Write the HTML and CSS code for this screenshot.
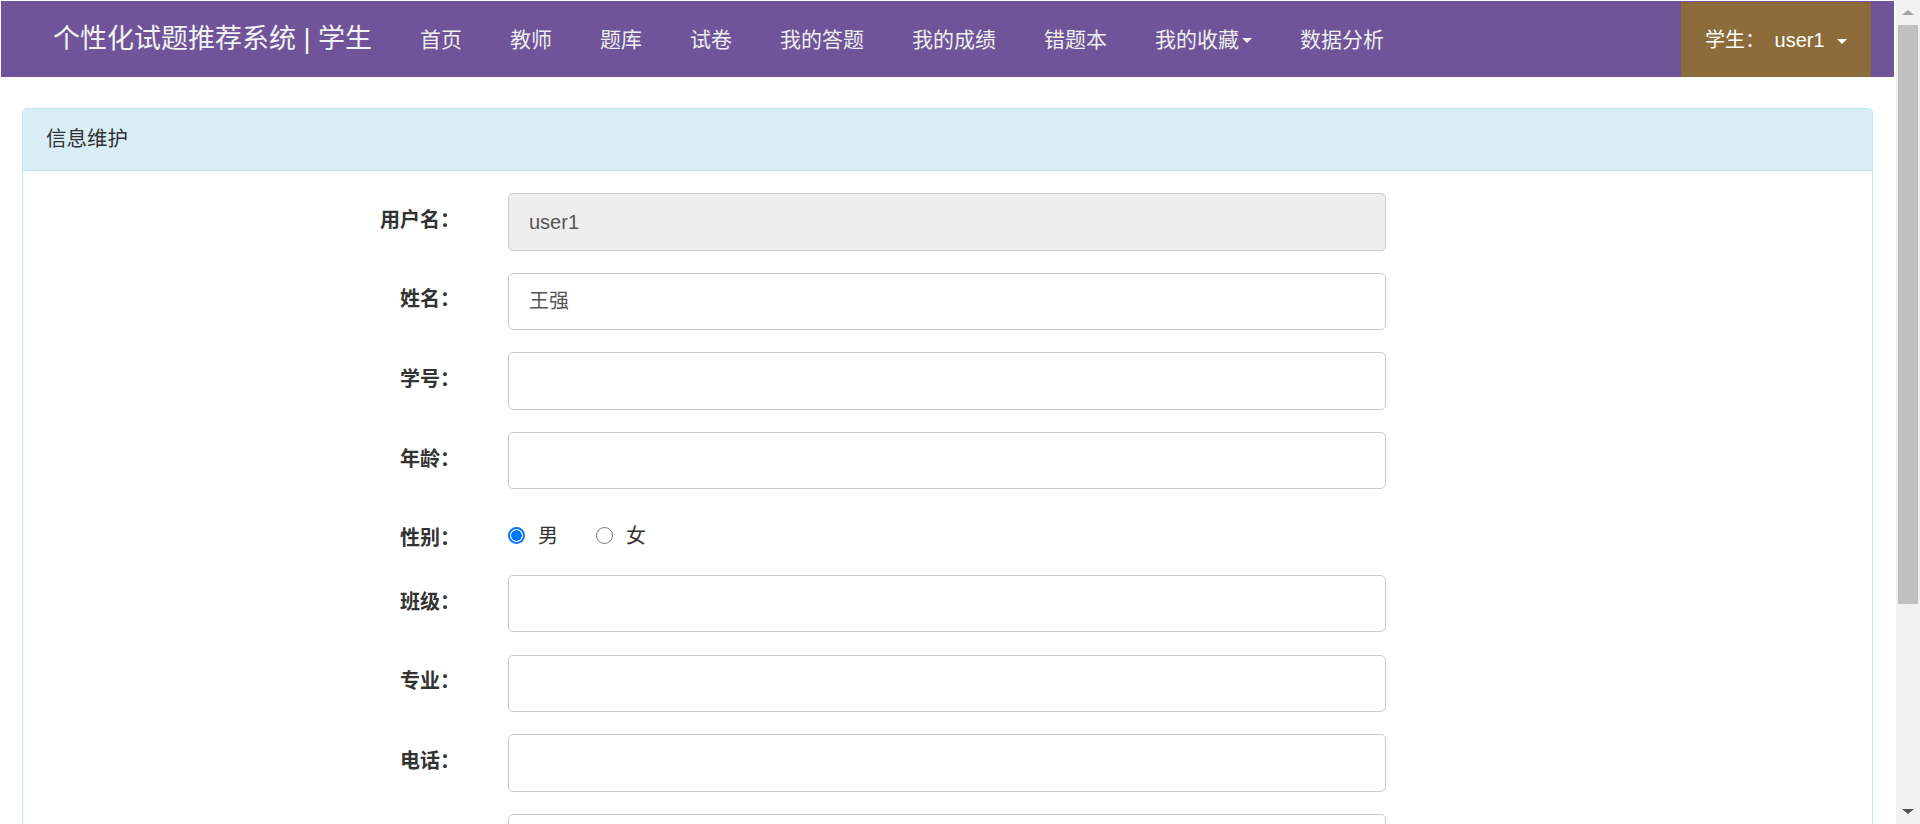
FILE: index.html
```html
<!DOCTYPE html>
<html lang="zh-CN">
<head>
<meta charset="utf-8">
<title>个性化试题推荐系统</title>
<link rel="stylesheet" href="styles.css">
</head>
<body>
<div class="window">
  <div class="page">
    <nav class="navbar">
      <div class="brand">个性化试题推荐系统 | 学生</div>
      <ul class="nav">
        <li class="nav-item">首页</li>
        <li class="nav-item">教师</li>
        <li class="nav-item">题库</li>
        <li class="nav-item">试卷</li>
        <li class="nav-item">我的答题</li>
        <li class="nav-item">我的成绩</li>
        <li class="nav-item">错题本</li>
        <li class="nav-item">我的收藏<span class="caret"></span></li>
        <li class="nav-item">数据分析</li>
      </ul>
      <div class="user">学生： <span class="user-name">user1</span><span class="caret caret-user"></span></div>
    </nav>

    <div class="panel">
      <div class="panel-heading">信息维护</div>
      <div class="panel-body">
        <div class="form-row">
          <label class="form-label">用户名：</label>
          <div class="form-input readonly">user1</div>
        </div>
        <div class="form-row">
          <label class="form-label">姓名：</label>
          <div class="form-input">王强</div>
        </div>
        <div class="form-row">
          <label class="form-label">学号：</label>
          <div class="form-input"></div>
        </div>
        <div class="form-row">
          <label class="form-label">年龄：</label>
          <div class="form-input"></div>
        </div>
        <div class="form-row radio-row">
          <label class="form-label">性别：</label>
          <div class="radios">
            <span class="radio checked"></span><span class="radio-text">男</span>
            <span class="radio"></span><span class="radio-text">女</span>
          </div>
        </div>
        <div class="form-row">
          <label class="form-label">班级：</label>
          <div class="form-input"></div>
        </div>
        <div class="form-row">
          <label class="form-label">专业：</label>
          <div class="form-input"></div>
        </div>
        <div class="form-row">
          <label class="form-label">电话：</label>
          <div class="form-input"></div>
        </div>
        <div class="form-row">
          <label class="form-label"></label>
          <div class="form-input"></div>
        </div>
      </div>
    </div>
  </div>

  <div class="scrollbar">
    <div class="sb-arrow sb-up"></div>
    <div class="sb-track"><div class="sb-thumb"></div></div>
    <div class="sb-arrow sb-down"></div>
  </div>
</div>
</body>
</html>
```

FILE: styles.css
```css
* { box-sizing: border-box; }
html, body {
  margin: 0;
  padding: 0;
  height: 824px;
  overflow: hidden;
  background: #fff;
  font-family: "Liberation Sans", "Noto Sans CJK SC", sans-serif;
  color: #333;
}
.window {
  display: flex;
  width: 1920px;
  height: 824px;
}
.page {
  width: 1896px;
  padding: 1px 2px 0 1px;
  overflow: hidden;
}

/* navbar */
.navbar {
  display: flex;
  align-items: stretch;
  height: 76px;
  background: #6f5499;
  padding: 0 23px 0 52px;
}
.brand {
  display: flex;
  align-items: center;
  font-size: 27px;
  line-height: 1;
  color: #f2f2f2;
  margin-right: 24px;
  white-space: nowrap;
}
.nav {
  display: flex;
  list-style: none;
  margin: 0;
  padding: 0;
  flex: 1;
}
.nav-item {
  display: flex;
  align-items: center;
  padding: 0 24px;
  font-size: 21px;
  line-height: 1;
  color: #eeeeee;
  white-space: nowrap;
}
.caret {
  display: inline-block;
  width: 0;
  height: 0;
  margin-left: 3px;
  margin-top: 3px;
  border-top: 5px solid #eee;
  border-left: 5.5px solid transparent;
  border-right: 5.5px solid transparent;
}
.user {
  display: flex;
  align-items: center;
  margin-top: 1px;
  width: 190px;
  padding: 0 24px;
  background: #8b6c3a;
  color: #fff;
  font-size: 20px;
  line-height: 1;
  white-space: pre;
}
.user-name { margin-left: 4px; }
.caret-user {
  margin-left: 12px;
  border-top-color: #fff;
}

/* panel */
.panel {
  margin: 31px 21px 0 21px;
  border: 1px solid #bce8f1;
  border-radius: 5px;
  height: 760px;
}
.panel-heading {
  height: 62px;
  display: flex;
  align-items: center;
  padding: 0 23px;
  background: #d9edf7;
  border-bottom: 1px solid #bce8f1;
  border-radius: 4px 4px 0 0;
  font-size: 20.5px;
  line-height: 1;
  color: #333;
}
.panel-body {
  padding-top: 22px;
  display: flex;
  flex-direction: column;
  gap: 22.1px;
}
.form-row {
  display: grid;
  grid-template-columns: 437px 878px;
  column-gap: 48px;
  align-items: center;
}
.form-label {
  text-align: right;
  font-weight: bold;
  font-size: 20px;
  line-height: 1;
  color: #333;
  margin-top: -4px;
  text-spacing-trim: space-all;
}
.form-input {
  height: 57.5px;
  border: 1px solid #ccc;
  border-radius: 5px;
  padding: 0 20px;
  display: flex;
  align-items: center;
  font-size: 20px;
  line-height: 1;
  color: #555;
  background: #fff;
}
.form-input.readonly {
  background: #eeeeee;
}
.radio-row {
  height: 41.5px;
}
.radio-row .form-label {
  margin-top: 12px;
}
.radios {
  display: flex;
  align-items: center;
  height: 41.5px;
  padding-top: 7px;
}
.radio {
  width: 17px;
  height: 17px;
  border-radius: 50%;
  border: 1px solid #767676;
  background: #fff;
  display: inline-block;
}
.radio.checked {
  border: 2px solid #0075ff;
  background: radial-gradient(circle, #0075ff 0 5px, #fff 5.5px);
}
.radio-text {
  font-size: 20px;
  line-height: 1;
  color: #333;
  margin-left: 13px;
  margin-right: 38px;
}

/* scrollbar */
.scrollbar {
  width: 24px;
  height: 824px;
  background: #f1f1f1;
  display: flex;
  flex-direction: column;
}
.sb-arrow {
  height: 25px;
  display: flex;
  align-items: center;
  justify-content: center;
}
.sb-up::before {
  content: "";
  border-bottom: 5px solid #a3a3a3;
  border-left: 6px solid transparent;
  border-right: 6px solid transparent;
}
.sb-down::before {
  content: "";
  border-top: 5px solid #505050;
  border-left: 6px solid transparent;
  border-right: 6px solid transparent;
}
.sb-track {
  flex: 1;
  padding: 0 2px;
}
.sb-thumb {
  height: 579px;
  background: #c1c1c1;
}
```
